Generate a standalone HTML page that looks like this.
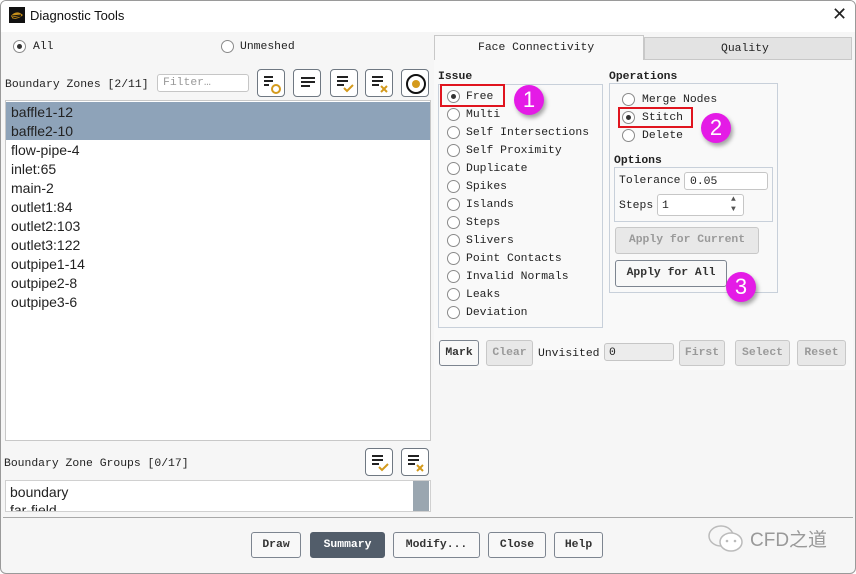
<!DOCTYPE html>
<html><head><meta charset="utf-8"><style>
*{box-sizing:border-box;margin:0;padding:0}
body{width:856px;height:574px;overflow:hidden;background:#fff;font-family:"Liberation Mono",monospace;font-size:11.4px;line-height:18px;color:#222;position:relative}
.a{position:absolute;white-space:nowrap}
.win{position:absolute;left:0;top:0;width:856px;height:574px;border:1px solid #9a9a9a;border-radius:6px;background:#f6f6f6;overflow:hidden}
.win>*{margin-left:-1px;margin-top:-1px}
.title{position:absolute;left:0;top:0;width:856px;height:32px;background:#fff}
.rad{position:absolute;width:13px;height:13px;border:1px solid #8a8a8a;border-radius:50%;background:#fff}
.rad.on::after{content:"";position:absolute;left:3px;top:3px;width:5px;height:5px;border-radius:50%;background:#333}
.btn{position:absolute;border:1px solid #7d8590;border-radius:3px;background:#f8f8f8;font-weight:bold;text-align:center;color:#333;font-size:11.4px}
.dis{border-color:#c8c8c8;background:#e8e8e8;color:#9a9a9a}
.ib{position:absolute;width:28px;height:28px;border:1px solid #6f7882;border-radius:4px;background:#fff}
.box{position:absolute;border:1px solid #c8d0da}
.inp{position:absolute;border:1px solid #c6c6c6;border-radius:3px;background:#fff}
.sans{font-family:"Liberation Sans",sans-serif;font-size:14px;line-height:normal}
.red{position:absolute;border:2px solid #e0141e}
.num{position:absolute;width:30px;height:30px;border-radius:50%;background:#e41be6;color:#fff;font-family:"Liberation Sans",sans-serif;font-size:22px;text-align:center;line-height:30px;box-shadow:2px 3px 4px rgba(0,0,0,.35)}
</style></head><body>
<div class="win">
<div class="title"></div>
<svg class="a" style="left:9px;top:7px" width="16" height="16"><rect width="16" height="16" fill="#111"/><path d="M2 9 Q6 4 11 6 L14 8 Q10 12 4 12 Z" fill="#c8901a"/><path d="M3 9 L12 8 M4 11 L12 9" stroke="#111" stroke-width="1"/></svg>
<div class="a sans" style="left:30px;top:8px;font-size:13px;color:#111">Diagnostic Tools</div>
<div class="a sans" style="left:832px;top:4px;font-size:18px;color:#222">✕</div>

<div class="rad on" style="left:13px;top:40px"></div><div class="a" style="left:33px;top:38px">All</div>
<div class="rad" style="left:221px;top:40px"></div><div class="a" style="left:240px;top:38px">Unmeshed</div>

<div class="a" style="left:5px;top:76px">Boundary Zones [2/11]</div>
<div class="inp" style="left:157px;top:74px;width:92px;height:18px"></div><div class="a" style="left:163px;top:74px;color:#999">Filter…</div>
<div class="ib" style="left:257px;top:69px"><svg width="28" height="28"><path d="M6 7h9M6 11h9M6 15h5" stroke="#222" stroke-width="2"/><circle cx="18" cy="19" r="4" fill="none" stroke="#d49a1c" stroke-width="2"/></svg></div>
<div class="ib" style="left:293px;top:69px"><svg width="28" height="28"><path d="M7 8h14M7 12h14M7 16h9" stroke="#222" stroke-width="2"/></svg></div>
<div class="ib" style="left:330px;top:69px"><svg width="28" height="28"><path d="M6 7h11M6 11h11M6 15h7" stroke="#222" stroke-width="2"/><path d="M13 18l3 3 6-6" stroke="#d49a1c" stroke-width="2" fill="none"/></svg></div>
<div class="ib" style="left:365px;top:69px"><svg width="28" height="28"><path d="M6 7h11M6 11h11M6 15h7" stroke="#222" stroke-width="2"/><path d="M15 16l6 6M21 16l-6 6" stroke="#d49a1c" stroke-width="2"/></svg></div>
<div class="ib" style="left:401px;top:69px"><svg width="28" height="28"><circle cx="14" cy="14" r="9" fill="none" stroke="#111" stroke-width="2"/><circle cx="14" cy="14" r="4" fill="#d49a1c"/></svg></div>

<div class="a" style="left:5px;top:100px;width:426px;height:341px;background:#fff;border:1px solid #c8c8c8"></div>
<div class="a" style="left:6px;top:102px;width:424px;height:38px;background:#8ea3b9"></div>
<div class="sans">
<div class="a" style="left:10px;top:103px">baffle1-12</div>
<div class="a" style="left:10px;top:122px">baffle2-10</div>
<div class="a" style="left:10px;top:141px">flow-pipe-4</div>
<div class="a" style="left:10px;top:160px">inlet:65</div>
<div class="a" style="left:10px;top:179px">main-2</div>
<div class="a" style="left:10px;top:198px">outlet1:84</div>
<div class="a" style="left:10px;top:217px">outlet2:103</div>
<div class="a" style="left:10px;top:236px">outlet3:122</div>
<div class="a" style="left:10px;top:255px">outpipe1-14</div>
<div class="a" style="left:10px;top:274px">outpipe2-8</div>
<div class="a" style="left:10px;top:293px">outpipe3-6</div>
</div>

<div class="a" style="left:4px;top:455px">Boundary Zone Groups [0/17]</div>
<div class="ib" style="left:365px;top:448px"><svg width="28" height="28"><path d="M6 7h11M6 11h11M6 15h7" stroke="#222" stroke-width="2"/><path d="M13 18l3 3 6-6" stroke="#d49a1c" stroke-width="2" fill="none"/></svg></div>
<div class="ib" style="left:401px;top:448px"><svg width="28" height="28"><path d="M6 7h11M6 11h11M6 15h7" stroke="#222" stroke-width="2"/><path d="M15 16l6 6M21 16l-6 6" stroke="#d49a1c" stroke-width="2"/></svg></div>
<div class="a" style="left:5px;top:480px;width:426px;height:32px;background:#fff;border:1px solid #d0d0d0;overflow:hidden">
<div class="a sans" style="left:4px;top:3px">boundary</div>
<div class="a sans" style="left:4px;top:21px">far-field</div>
<div class="a" style="left:407px;top:0;width:16px;height:32px;background:#9aa6b0"></div>
</div>
<div class="a" style="left:3px;top:517px;width:850px;height:1px;background:#a8a8a8"></div>

<div class="btn" style="left:251px;top:532px;width:50px;height:26px;line-height:24px">Draw</div>
<div class="btn" style="left:310px;top:532px;width:75px;height:26px;line-height:24px;background:#525d6a;color:#fff;border-color:#525d6a">Summary</div>
<div class="btn" style="left:393px;top:532px;width:87px;height:26px;line-height:24px">Modify...</div>
<div class="btn" style="left:488px;top:532px;width:58px;height:26px;line-height:24px">Close</div>
<div class="btn" style="left:554px;top:532px;width:49px;height:26px;line-height:24px">Help</div>
<svg class="a" style="left:706px;top:522px" width="40" height="34"><ellipse cx="15" cy="14" rx="12" ry="10" fill="none" stroke="#bbb" stroke-width="1.5"/><ellipse cx="25" cy="20" rx="11" ry="9" fill="#fff" stroke="#bbb" stroke-width="1.5"/><circle cx="21" cy="19" r="1.3" fill="#bbb"/><circle cx="29" cy="19" r="1.3" fill="#bbb"/></svg>
<div class="a" style="left:750px;top:525px;font-family:'Liberation Sans','Noto Sans CJK SC',sans-serif;font-size:19px;line-height:normal;color:#999">CFD之道</div>

<!-- right -->
<div class="a" style="left:434px;top:35px;width:210px;height:25px;background:#f8f8f8;border:1px solid #c8c8c8;border-bottom:none"></div>
<div class="a" style="left:478px;top:39px">Face Connectivity</div>
<div class="a" style="left:644px;top:37px;width:208px;height:23px;background:#e3e3e3;border:1px solid #c8c8c8"></div>
<div class="a" style="left:721px;top:40px">Quality</div>
<div class="a" style="left:434px;top:60px;width:419px;height:310px;background:#f9f9f9"></div>

<div class="a" style="left:438px;top:68px;font-weight:bold">Issue</div>
<div class="box" style="left:438px;top:84px;width:165px;height:244px"></div>
<div class="rad on" style="left:447px;top:90px"></div><div class="a" style="left:466px;top:88px">Free</div>
<div class="rad" style="left:447px;top:108px"></div><div class="a" style="left:466px;top:106px">Multi</div>
<div class="rad" style="left:447px;top:126px"></div><div class="a" style="left:466px;top:124px">Self Intersections</div>
<div class="rad" style="left:447px;top:144px"></div><div class="a" style="left:466px;top:142px">Self Proximity</div>
<div class="rad" style="left:447px;top:162px"></div><div class="a" style="left:466px;top:160px">Duplicate</div>
<div class="rad" style="left:447px;top:180px"></div><div class="a" style="left:466px;top:178px">Spikes</div>
<div class="rad" style="left:447px;top:198px"></div><div class="a" style="left:466px;top:196px">Islands</div>
<div class="rad" style="left:447px;top:216px"></div><div class="a" style="left:466px;top:214px">Steps</div>
<div class="rad" style="left:447px;top:234px"></div><div class="a" style="left:466px;top:232px">Slivers</div>
<div class="rad" style="left:447px;top:252px"></div><div class="a" style="left:466px;top:250px">Point Contacts</div>
<div class="rad" style="left:447px;top:270px"></div><div class="a" style="left:466px;top:268px">Invalid Normals</div>
<div class="rad" style="left:447px;top:288px"></div><div class="a" style="left:466px;top:286px">Leaks</div>
<div class="rad" style="left:447px;top:306px"></div><div class="a" style="left:466px;top:304px">Deviation</div>

<div class="a" style="left:609px;top:68px;font-weight:bold">Operations</div>
<div class="box" style="left:609px;top:83px;width:169px;height:210px"></div>
<div class="rad" style="left:622px;top:93px"></div><div class="a" style="left:642px;top:91px">Merge Nodes</div>
<div class="rad on" style="left:622px;top:111px"></div><div class="a" style="left:642px;top:109px">Stitch</div>
<div class="rad" style="left:622px;top:129px"></div><div class="a" style="left:642px;top:127px">Delete</div>
<div class="a" style="left:614px;top:152px;font-weight:bold">Options</div>
<div class="box" style="left:614px;top:167px;width:159px;height:55px"></div>
<div class="a" style="left:619px;top:172px">Tolerance</div>
<div class="inp" style="left:684px;top:172px;width:84px;height:18px"></div><div class="a" style="left:690px;top:173px">0.05</div>
<div class="a" style="left:619px;top:197px">Steps</div>
<div class="inp" style="left:657px;top:194px;width:87px;height:22px"></div><div class="a" style="left:662px;top:197px">1</div>
<div class="a" style="left:731px;top:195px;font-size:8px;color:#555;line-height:10px">▲<br>▼</div>
<div class="btn dis" style="left:615px;top:227px;width:144px;height:27px;line-height:25px">Apply for Current</div>
<div class="btn" style="left:615px;top:260px;width:112px;height:27px;line-height:25px">Apply for All</div>

<div class="btn" style="left:439px;top:340px;width:40px;height:26px;line-height:24px">Mark</div>
<div class="btn dis" style="left:486px;top:340px;width:47px;height:26px;line-height:24px">Clear</div>
<div class="a" style="left:538px;top:345px">Unvisited</div>
<div class="inp" style="left:604px;top:343px;width:70px;height:18px;background:#ececec"></div><div class="a" style="left:609px;top:344px">0</div>
<div class="btn dis" style="left:679px;top:340px;width:46px;height:26px;line-height:24px">First</div>
<div class="btn dis" style="left:735px;top:340px;width:55px;height:26px;line-height:24px">Select</div>
<div class="btn dis" style="left:797px;top:340px;width:49px;height:26px;line-height:24px">Reset</div>

<div class="red" style="left:440px;top:84px;width:65px;height:23px"></div>
<div class="red" style="left:618px;top:107px;width:75px;height:21px"></div>
<div class="num" style="left:514px;top:85px">1</div>
<div class="num" style="left:701px;top:113px">2</div>
<div class="num" style="left:726px;top:272px">3</div>
</div>
</body></html>
